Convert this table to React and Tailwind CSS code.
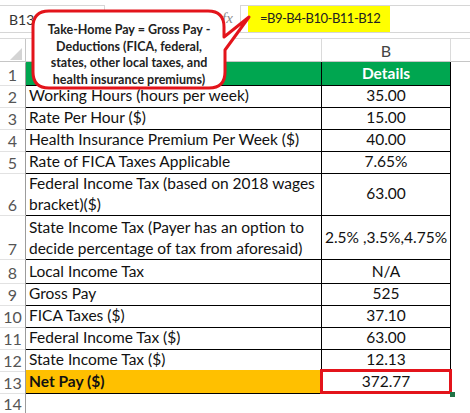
import React from "react";

const rows = [
  { n: 1, a: "", b: "Details", head: true },
  { n: 2, a: "Working Hours (hours per week)", b: "35.00" },
  { n: 3, a: "Rate Per Hour ($)", b: "15.00" },
  { n: 4, a: "Health Insurance Premium Per Week ($)", b: "40.00" },
  { n: 5, a: "Rate of FICA Taxes Applicable", b: "7.65%" },
  { n: 6, a: ["Federal Income Tax (based on 2018 wages", "bracket)($)"], b: "63.00", tall: true },
  { n: 7, a: ["State Income Tax (Payer has an option to", "decide percentage of tax from aforesaid)"], b: "2.5% ,3.5%,4.75%", tall: true },
  { n: 8, a: "Local Income Tax", b: "N/A" },
  { n: 9, a: "Gross Pay", b: "525" },
  { n: 10, a: "FICA Taxes ($)", b: "37.10" },
  { n: 11, a: "Federal Income Tax ($)", b: "63.00" },
  { n: 12, a: "State Income Tax ($)", b: "12.13" },
  { n: 13, a: "Net Pay ($)", b: "372.77", total: true },
];

export default function App() {
  return (
    <div className="relative w-[470px] h-[413px] overflow-hidden bg-white text-[#111] font-['Lato','Open_Sans',sans-serif]">
      {/* top bar: name box + formula bar */}
      <div className="flex items-start h-[38px] pt-[5px]">
        <div className="w-[105px] h-[28px] border border-[#d6d6d6] border-l-0 flex items-center pl-[9px] text-[14px] text-[#333]">
          B13
        </div>
        <div className="w-[117px]" />
        <span className="w-[18px] text-[15px] italic text-[#8a8a8a] font-['Liberation_Serif',serif] leading-[26px]">fx</span>
        <div className="flex-1 h-[28px] border border-r-0 border-[#d6d6d6] pl-[7px]">
          <div className="w-[142px] h-[26px] bg-[#ffff00] flex items-center pl-[12px] text-[13px] tracking-[-0.5px] whitespace-nowrap text-[#222]">
            =B9-B4-B10-B11-B12
          </div>
        </div>
      </div>

      {/* column headers */}
      <div className="grid grid-cols-[26px_296px_129px_1fr] h-[24px] border-t border-[#dadada] border-b border-b-[#c6c6c6] text-[16px] text-[#444]">
        <div className="relative border-r border-[#c6c6c6]">
          <div className="absolute right-[3px] bottom-[3px] w-0 h-0 border-l-[12px] border-l-transparent border-b-[12px] border-b-[#d4d4d4]" />
        </div>
        <div className="border-r border-[#dadada]" />
        <div className="flex items-center justify-center border-r border-[#dadada]">B</div>
        <div />
      </div>

      {/* rows */}
      {rows.map((r) => (
        <div
          key={r.n}
          className={`grid grid-cols-[26px_296px_129px_1fr] ${r.tall ? "h-[44px]" : "h-[22px]"}`}
        >
          <div className="flex items-end justify-center border-r border-[#9c9c9c] border-b border-b-[#e2e2e2] text-[16px] leading-[21px] text-[#555]">
            {r.n}
          </div>
          <div
            className={`border-b border-r border-black text-[15.5px] pl-[3px] ${
              r.head
                ? "bg-[#00a650] text-white font-bold flex items-center"
                : r.total
                ? "bg-[#ffc000] font-bold flex items-center"
                : r.tall
                ? "flex flex-col justify-center leading-[21px]"
                : "flex items-center"
            }`}
          >
            {Array.isArray(r.a) ? r.a.map((l) => <span key={l}>{l}</span>) : r.a}
          </div>
          <div
            className={`border-b border-r border-black text-[15.5px] flex items-center justify-center ${
              r.head ? "bg-[#00a650] text-white font-bold" : ""
            } ${r.total ? "relative" : ""}`}
          >
            {r.b}
            {r.total && (
              <>
                <div className="absolute -left-[2px] -top-[1px] -right-[2px] -bottom-[1px] border-[3px] border-[#e3141b]" />
                <div className="absolute -right-[5px] -bottom-[4px] w-[5px] h-[5px] bg-[#217346]" />
              </>
            )}
          </div>
          <div />
        </div>
      ))}
      <div className="grid grid-cols-[26px_1fr] h-[22px]">
        <div className="flex items-end justify-center border-r border-[#9c9c9c] text-[16px] leading-[21px] text-[#555]">14</div>
        <div />
      </div>

      {/* callout */}
      <svg className="absolute left-0 top-0" width="260" height="95" viewBox="0 0 260 95">
        <path
          d="M49 11 H208 Q224 11 224 27 V37 L249 17 L225 50 V72 Q225 88 209 88 H49 Q33 88 33 72 V27 Q33 11 49 11 Z"
          fill="white"
          stroke="#e3141b"
          strokeWidth="3"
          strokeLinejoin="round"
        />
      </svg>
      <div className="absolute left-[36px] top-[22px] w-[186px] text-center text-[12.5px] leading-[16.5px] font-bold text-[#222]">
        Take-Home Pay = Gross Pay -<br />
        Deductions (FICA, federal,<br />
        states, other local taxes, and<br />
        health insurance premiums)
      </div>
    </div>
  );
}
